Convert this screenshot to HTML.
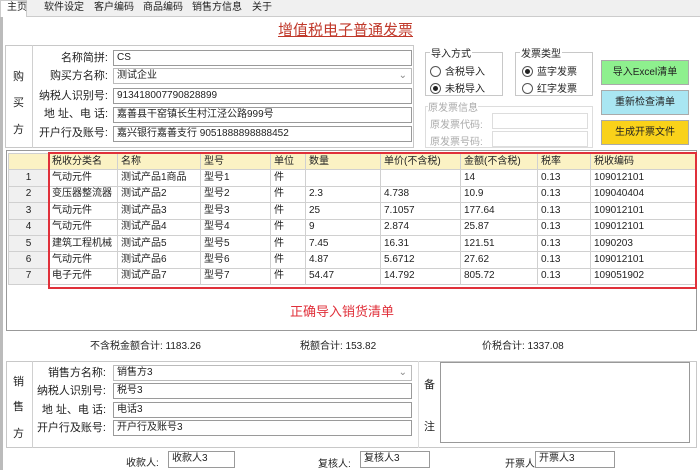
<!DOCTYPE html>
<html><head><meta charset="utf-8"><style>
*{box-sizing:border-box;margin:0;padding:0}
body{width:700px;height:470px;background:#f0f0f0;font-family:"Liberation Sans","Noto Sans CJK SC",sans-serif;font-size:11px;color:#222;position:relative;overflow:hidden}
.a{position:absolute}
.tab{position:absolute;top:0;height:16px;line-height:15px;font-size:10px}
.inp{position:absolute;background:#fff;border:1px solid #9a9a9a;height:16px;line-height:14px;padding-left:3px;font-size:10px;white-space:nowrap}
.lbl{position:absolute;text-align:right;font-size:11px;line-height:16px}
.box{position:absolute;border:1px solid #c8c8c8}
.btn{position:absolute;border:1px solid #aaa;text-align:center;font-size:10px;line-height:23px}
table{border-collapse:collapse;font-size:10px}
td{border:1px solid #d0d0d0;height:16.4px;padding:0 0 0 3px;white-space:nowrap;background:#fff;line-height:14px}
tr.h td{background:#fbf2c4}
td.n{background:#f0f0f0;text-align:center;padding:0}
.radio{display:inline-block;width:11px;height:11px;border:1px solid #555;border-radius:50%;vertical-align:-2px;margin-right:4px;position:relative;background:#fff}
.radio.on::after{content:"";position:absolute;left:2px;top:2px;width:5px;height:5px;border-radius:50%;background:#222}
</style></head><body>
<div class="a" style="left:0;top:16px;width:700px;height:454px;background:#fff;border-left:3px solid #bbb;border-top:1px solid #ccc"></div>
<div class="a" style="left:0;top:0;width:27px;height:17px;background:#fff;border:1px solid #ccc;border-bottom:none"></div>
<div class="tab" style="left:7px">主页</div>
<div class="tab" style="left:44px">软件设定</div>
<div class="tab" style="left:94px">客户编码</div>
<div class="tab" style="left:143px">商品编码</div>
<div class="tab" style="left:192px">销售方信息</div>
<div class="tab" style="left:252px">关于</div>
<div class="a" style="left:278px;top:20px;font-size:15px;color:#c0392b;text-decoration:underline;line-height:22px">增值税电子普通发票</div>

<div class="box" style="left:5px;top:45px;width:409px;height:103px"></div>
<div class="a" style="left:32px;top:45px;width:1px;height:103px;background:#d0d0d0"></div>
<div class="a" style="left:13px;top:68px;font-size:11px">购</div>
<div class="a" style="left:13px;top:94px;font-size:11px">买</div>
<div class="a" style="left:13px;top:121px;font-size:11px">方</div>
<div class="lbl" style="left:34px;width:74px;top:50px">名称简拼:</div>
<div class="lbl" style="left:34px;width:74px;top:68px">购买方名称:</div>
<div class="lbl" style="left:34px;width:74px;top:88px">纳税人识别号:</div>
<div class="lbl" style="left:34px;width:74px;top:106px">地 址、电 话:</div>
<div class="lbl" style="left:34px;width:74px;top:125px">开户行及账号:</div>
<div class="inp" style="left:113px;top:50px;width:299px">CS</div>
<div class="inp" style="left:113px;top:68px;width:299px;border-color:#bbb">测试企业<span style="position:absolute;right:4px;color:#888">⌄</span></div>
<div class="inp" style="left:113px;top:88px;width:299px">913418007790828899</div>
<div class="inp" style="left:113px;top:107px;width:299px">嘉善县干窑镇长生村江泾公路999号</div>
<div class="inp" style="left:113px;top:126px;width:299px">嘉兴银行嘉善支行 9051888898888452</div>

<div class="box" style="left:425px;top:52px;width:78px;height:44px"></div>
<div class="a" style="left:430px;top:45px;background:#fff;font-size:10px;padding:0 1px">导入方式</div>
<div class="a" style="left:430px;top:63px;font-size:10px"><span class="radio"></span>含税导入</div>
<div class="a" style="left:430px;top:80px;font-size:10px"><span class="radio on"></span>未税导入</div>
<div class="box" style="left:515px;top:52px;width:78px;height:44px"></div>
<div class="a" style="left:520px;top:45px;background:#fff;font-size:10px;padding:0 1px">发票类型</div>
<div class="a" style="left:522px;top:63px;font-size:10px"><span class="radio on"></span>蓝字发票</div>
<div class="a" style="left:522px;top:80px;font-size:10px"><span class="radio"></span>红字发票</div>
<div class="box" style="left:425px;top:106px;width:168px;height:42px;border-color:#ddd"></div>
<div class="a" style="left:428px;top:99px;background:#fff;font-size:10px;color:#aaa">原发票信息</div>
<div class="a" style="left:430px;top:116px;font-size:10px;color:#aaa">原发票代码:</div>
<div class="a" style="left:430px;top:133px;font-size:10px;color:#aaa">原发票号码:</div>
<div class="inp" style="left:492px;top:113px;width:96px;border-color:#ddd"></div>
<div class="inp" style="left:492px;top:131px;width:96px;border-color:#ddd"></div>
<div class="btn" style="left:601px;top:60px;width:88px;height:25px;background:#8ef08e">导入Excel清单</div>
<div class="btn" style="left:601px;top:90px;width:88px;height:25px;background:#a9e6f2">重新检查清单</div>
<div class="btn" style="left:601px;top:120px;width:88px;height:25px;background:#f9d21a">生成开票文件</div>

<div class="box" style="left:6px;top:150px;width:691px;height:181px;border-color:#999"></div>
<table class="a" style="left:8px;top:153px;width:688px">
<colgroup><col style="width:40px"><col style="width:69px"><col style="width:83px"><col style="width:70px"><col style="width:35px"><col style="width:75px"><col style="width:80px"><col style="width:77px"><col style="width:53px"><col></colgroup>
<tr class="h"><td class="n" style="background:#fbf2c4"></td><td>税收分类名</td><td>名称</td><td>型号</td><td>单位</td><td>数量</td><td>单价(不含税)</td><td>金额(不含税)</td><td>税率</td><td>税收编码</td></tr>
<tr><td class="n">1</td><td>气动元件</td><td>测试产品1商品</td><td>型号1</td><td>件</td><td></td><td></td><td>14</td><td>0.13</td><td>109012101</td></tr>
<tr><td class="n">2</td><td>变压器整流器</td><td>测试产品2</td><td>型号2</td><td>件</td><td>2.3</td><td>4.738</td><td>10.9</td><td>0.13</td><td>109040404</td></tr>
<tr><td class="n">3</td><td>气动元件</td><td>测试产品3</td><td>型号3</td><td>件</td><td>25</td><td>7.1057</td><td>177.64</td><td>0.13</td><td>109012101</td></tr>
<tr><td class="n">4</td><td>气动元件</td><td>测试产品4</td><td>型号4</td><td>件</td><td>9</td><td>2.874</td><td>25.87</td><td>0.13</td><td>109012101</td></tr>
<tr><td class="n">5</td><td>建筑工程机械</td><td>测试产品5</td><td>型号5</td><td>件</td><td>7.45</td><td>16.31</td><td>121.51</td><td>0.13</td><td>1090203</td></tr>
<tr><td class="n">6</td><td>气动元件</td><td>测试产品6</td><td>型号6</td><td>件</td><td>4.87</td><td>5.6712</td><td>27.62</td><td>0.13</td><td>109012101</td></tr>
<tr><td class="n">7</td><td>电子元件</td><td>测试产品7</td><td>型号7</td><td>件</td><td>54.47</td><td>14.792</td><td>805.72</td><td>0.13</td><td>109051902</td></tr>
</table>
<div class="a" style="left:48px;top:152px;width:649px;height:137px;border:2px solid #e0303a"></div>
<div class="a" style="left:290px;top:301px;font-size:13px;color:#e0303a">正确导入销货清单</div>

<div class="a" style="left:90px;top:337px;font-size:10px">不含税金额合计: 1183.26</div>
<div class="a" style="left:300px;top:337px;font-size:10px">税额合计: 153.82</div>
<div class="a" style="left:482px;top:337px;font-size:10px">价税合计: 1337.08</div>

<div class="box" style="left:6px;top:361px;width:691px;height:87px"></div>
<div class="a" style="left:32px;top:361px;width:1px;height:87px;background:#d0d0d0"></div>
<div class="a" style="left:13px;top:373px">销</div>
<div class="a" style="left:13px;top:398px">售</div>
<div class="a" style="left:13px;top:425px">方</div>
<div class="lbl" style="left:34px;width:72px;top:365px">销售方名称:</div>
<div class="lbl" style="left:34px;width:72px;top:383px">纳税人识别号:</div>
<div class="lbl" style="left:34px;width:72px;top:402px">地 址、电 话:</div>
<div class="lbl" style="left:34px;width:72px;top:420px">开户行及账号:</div>
<div class="inp" style="left:113px;top:365px;width:299px;border-color:#bbb">销售方3<span style="position:absolute;right:4px;color:#888">⌄</span></div>
<div class="inp" style="left:113px;top:383px;width:299px">税号3</div>
<div class="inp" style="left:113px;top:402px;width:299px">电话3</div>
<div class="inp" style="left:113px;top:420px;width:299px">开户行及账号3</div>
<div class="a" style="left:418px;top:361px;width:1px;height:87px;background:#ddd"></div>
<div class="a" style="left:424px;top:376px">备</div>
<div class="a" style="left:424px;top:418px">注</div>
<div class="a" style="left:440px;top:362px;width:250px;height:81px;background:#fff;border:1px solid #999"></div>
<div class="a" style="left:126px;top:454px;font-size:10px">收款人:</div>
<div class="inp" style="left:168px;top:451px;width:67px;height:17px">收款人3</div>
<div class="a" style="left:318px;top:455px;font-size:10px">复核人:</div>
<div class="inp" style="left:360px;top:451px;width:70px;height:17px">复核人3</div>
<div class="a" style="left:505px;top:455px;font-size:10px">开票人:</div>
<div class="inp" style="left:535px;top:451px;width:80px;height:17px">开票人3</div>
</body></html>
